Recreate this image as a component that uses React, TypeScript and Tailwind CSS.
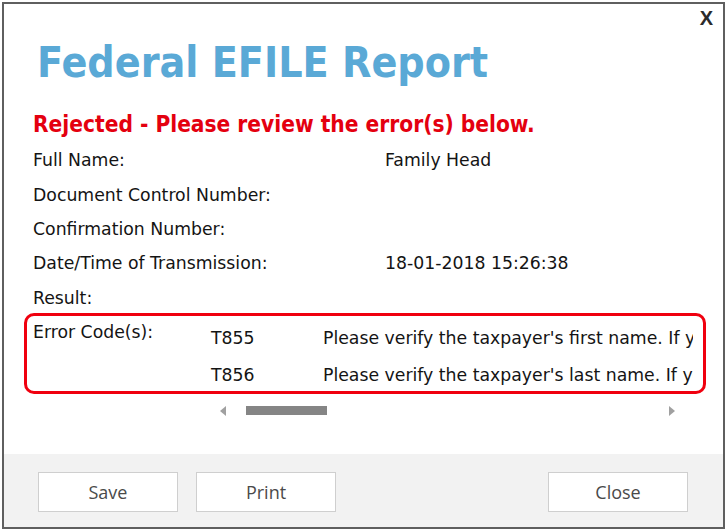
import React from "react";

const body = { fontFamily: '"DejaVu Sans", sans-serif' };
const cond = { fontFamily: '"DejaVu Sans Condensed", "DejaVu Sans", sans-serif' };
const btnFont = { fontFamily: '"Open Sans", "Noto Sans", sans-serif' };

function Row({ label, value }: { label: string; value?: string }) {
  return (
    <div className="flex h-[34.4px] items-center">
      <div className="w-[352px] shrink-0">{label}</div>
      <div>{value}</div>
    </div>
  );
}

function Btn({ children }: { children: React.ReactNode }) {
  return (
    <button
      className="flex h-[40px] w-[140px] items-center justify-center border border-[#cfcfcf] bg-white text-[18px] text-[#4a4a4a]"
      style={btnFont}
    >
      {children}
    </button>
  );
}

export default function App() {
  return (
    <div className="h-[532px] w-[727px] bg-white pl-[2px] pt-[2px]">
      <div className="flex h-[527px] w-[723px] flex-col border-2 border-[#5f5f5f] bg-white" style={body}>
        <div className="relative flex-1">
          <div className="flex h-[29px] justify-end pr-[10px] pt-[4px]">
            <span className="text-[20px] font-bold leading-none text-[#2b2b2b]" style={{ fontFamily: '"Liberation Sans", sans-serif' }}>
              X
            </span>
          </div>
          <div className="pl-[33px] text-[42.5px] font-bold leading-[60px] text-[#5aa9d6]" style={cond}>
            Federal EFILE Report
          </div>
          <div className="mt-[16px] pl-[29px] text-[22.5px] font-bold leading-[30px] text-[#e4000f]" style={cond}>
            Rejected - Please review the error(s) below.
          </div>
          <div className="mt-[5px] pl-[29px] text-[17.3px] text-[#141414]">
            <Row label="Full Name:" value="Family Head" />
            <Row label="Document Control Number:" />
            <Row label="Confirmation Number:" />
            <Row label="Date/Time of Transmission:" value="18-01-2018 15:26:38" />
            <Row label="Result:" />
          </div>
          <div className="-mt-[3px] ml-[20px] h-[81px] w-[682px] overflow-hidden rounded-[10px] border-[3px] border-[#f0000f] text-[17.3px] text-[#141414]">
            <div className="flex pl-[6px]">
              <div className="w-[178px] shrink-0 pt-[3px] leading-[26px]">Error Code(s):</div>
              <div className="flex flex-col pt-[10px]">
                <div className="flex h-[37px] whitespace-nowrap leading-[24px]">
                  <div className="w-[112px] shrink-0">T855</div>
                  <div className="w-[370px] overflow-hidden">Please verify the taxpayer's first name. If you</div>
                </div>
                <div className="flex h-[37px] whitespace-nowrap leading-[24px]">
                  <div className="w-[112px] shrink-0">T856</div>
                  <div className="w-[370px] overflow-hidden">Please verify the taxpayer's last name. If you</div>
                </div>
              </div>
            </div>
          </div>
          <div className="mt-[11px] flex h-[12px] items-center">
            <div className="ml-[216px] h-0 w-0 border-y-[5px] border-r-[6px] border-y-transparent border-r-[#a0a0a0]" />
            <div className="ml-[20px] h-[9px] w-[81px] bg-[#858585]" />
            <div className="ml-[342px] h-0 w-0 border-y-[5px] border-l-[6px] border-y-transparent border-l-[#a0a0a0]" />
          </div>
        </div>
        <div className="flex h-[73px] items-start justify-between bg-[#f2f2f2] pl-[34px] pr-[35px] pt-[18px]">
          <div className="flex gap-[18px]">
            <Btn>Save</Btn>
            <Btn>Print</Btn>
          </div>
          <Btn>Close</Btn>
        </div>
      </div>
    </div>
  );
}
